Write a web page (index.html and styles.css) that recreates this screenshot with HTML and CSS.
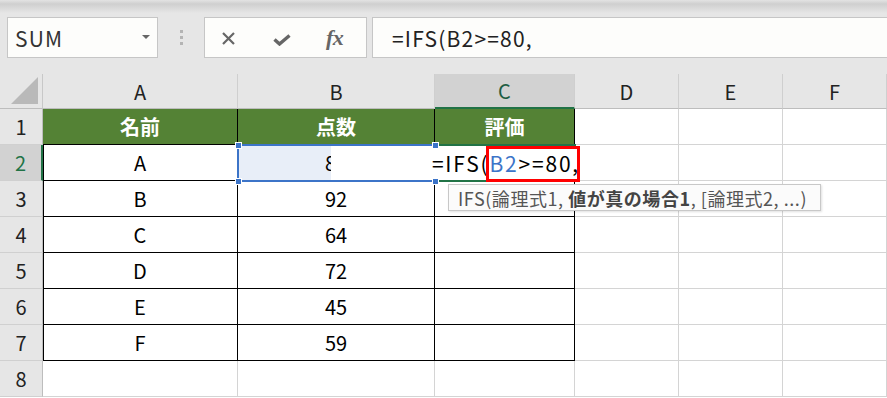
FILE: index.html
```html
<!DOCTYPE html>
<html lang="ja">
<head>
<meta charset="utf-8">
<title>IFS</title>
<link rel="stylesheet" href="styles.css">
</head>
<body>
<div class="app">
  <div class="toolbar">
    <div class="namebox"><span class="nb-text">SUM</span><span class="nb-arrow"></span></div>
    <div class="sep"><i></i><i></i><i></i></div>
    <div class="btns">
      <svg class="ic-x" width="13" height="13" viewBox="0 0 13 13"><path d="M1 1 L12 12 M12 1 L1 12" stroke="#666" stroke-width="2.2" fill="none"/></svg>
      <svg class="ic-check" width="18" height="12" viewBox="0 0 18 12"><path d="M1.5 5.5 L6.5 10 L16.5 1.5" stroke="#666" stroke-width="3.4" fill="none" stroke-linejoin="miter"/></svg>
      <span class="fx">fx</span>
    </div>
    <div class="formula">=IFS(B2&gt;=80,</div>
  </div>
  <div class="sheet">
    <div class="corner"></div>
    <div class="ch">A</div>
    <div class="ch">B</div>
    <div class="ch act">C</div>
    <div class="ch">D</div>
    <div class="ch">E</div>
    <div class="ch">F</div>

    <div class="rh">1</div>
    <div class="c t hd">名前</div>
    <div class="c t hd">点数</div>
    <div class="c t hd">評価</div>
    <div class="c"></div><div class="c"></div><div class="c"></div>

    <div class="rh act">2</div>
    <div class="c t fa">A</div>
    <div class="c t selfill">80</div>
    <div class="c t"></div>
    <div class="c"></div><div class="c"></div><div class="c"></div>

    <div class="rh">3</div>
    <div class="c t fa">B</div>
    <div class="c t">92</div>
    <div class="c t"></div>
    <div class="c"></div><div class="c"></div><div class="c"></div>

    <div class="rh">4</div>
    <div class="c t fa">C</div>
    <div class="c t">64</div>
    <div class="c t"></div>
    <div class="c"></div><div class="c"></div><div class="c"></div>

    <div class="rh">5</div>
    <div class="c t fa">D</div>
    <div class="c t">72</div>
    <div class="c t"></div>
    <div class="c"></div><div class="c"></div><div class="c"></div>

    <div class="rh">6</div>
    <div class="c t fa">E</div>
    <div class="c t">45</div>
    <div class="c t"></div>
    <div class="c"></div><div class="c"></div><div class="c"></div>

    <div class="rh">7</div>
    <div class="c t fa">F</div>
    <div class="c t">59</div>
    <div class="c t"></div>
    <div class="c"></div><div class="c"></div><div class="c"></div>

    <div class="rh">8</div>
    <div class="c"></div><div class="c"></div><div class="c"></div>
    <div class="c"></div><div class="c"></div><div class="c"></div>

    <div class="active-cell"></div>
    <div class="ref-sel"></div>
    <div class="editor">=IFS(<span class="ref">B2</span>&gt;=80,</div>
    <span class="handle h1"></span>
    <span class="handle h2"></span>
    <span class="handle h3"></span>
    <span class="handle h4"></span>
    <div class="redbox"></div>
    <div class="tip">IFS(論理式1, <b>値が真の場合1</b>, [論理式2, ...)</div>
  </div>
</div>
</body>
</html>
```
FILE: styles.css
```css
html, body {
  margin: 0;
  padding: 0;
}
body {
  width: 887px;
  height: 398px;
  overflow: hidden;
  background: #ffffff;
  font-family: "Noto Sans CJK JP", "Noto Sans", sans-serif;
}
.app {
  width: 887px;
}
.toolbar {
  height: 74px;
  box-sizing: border-box;
  padding: 17px 0 0 7px;
  display: flex;
  align-items: flex-start;
  background: linear-gradient(#e3e3e3 0px, #cfcfcf 4px, #e6e6e6 13px, #e6e6e6 100%);
}
.namebox {
  width: 151px;
  height: 41px;
  box-sizing: border-box;
  border: 1px solid #c6c6c6;
  background: #fdfdfb;
  display: flex;
  align-items: center;
  padding-left: 7px;
  position: relative;
}
.nb-text {
  font-size: 21px;
  color: #333;
  letter-spacing: 1.2px;
}
.nb-arrow {
  position: absolute;
  left: 134px;
  top: 17px;
  width: 0;
  height: 0;
  border-left: 4px solid transparent;
  border-right: 4px solid transparent;
  border-top: 4px solid #666;
}
.sep {
  width: 46px;
  height: 41px;
  display: flex;
  flex-direction: column;
  align-items: center;
  justify-content: center;
  gap: 3px;
}
.sep i {
  display: block;
  width: 3px;
  height: 3px;
  background: #b4b4b4;
}
.btns {
  width: 163px;
  height: 41px;
  box-sizing: border-box;
  border: 1px solid #c6c6c6;
  background: #fdfdfb;
  display: flex;
  align-items: center;
  padding-left: 17px;
}
.ic-x {
  display: block;
  margin-top: 2px;
}
.ic-check {
  display: block;
  margin-left: 38px;
  margin-top: 4px;
}
.fx {
  margin-left: 35px;
  font-family: "Liberation Serif", serif;
  font-style: italic;
  font-weight: bold;
  font-size: 22px;
  color: #666;
  letter-spacing: -0.5px;
}
.formula {
  margin-left: 5px;
  flex: 1;
  height: 41px;
  box-sizing: border-box;
  border: 1px solid #c6c6c6;
  border-right: none;
  background: #fdfdfb;
  padding-left: 19px;
  display: flex;
  align-items: center;
  font-size: 21px;
  letter-spacing: 1.2px;
  color: #222;
}
.sheet {
  position: relative;
  display: grid;
  grid-template-columns: 43px 195px 197px 140px 104px 104px 104px;
  grid-template-rows: 35px repeat(8, 36px);
  background: #fff;
}
.sheet > div.c, .sheet > div.ch, .sheet > div.rh, .sheet > div.corner {
  box-sizing: border-box;
}
.corner {
  background: #e6e6e6;
  border-right: 1px solid #c8c8c8;
  border-bottom: 1px solid #bdbdbd;
  position: relative;
}
.corner::after {
  content: "";
  position: absolute;
  right: 4px;
  bottom: 4px;
  width: 0;
  height: 0;
  border-left: 27px solid transparent;
  border-bottom: 27px solid #b9b9b9;
}
.ch {
  background: #e6e6e6;
  border-right: 1px solid #cfcfcf;
  border-bottom: 1px solid #bdbdbd;
  display: flex;
  align-items: center;
  justify-content: center;
  font-size: 20px;
  color: #222;
}
.ch.act {
  background: #d2d2d2;
  color: #1d5d42;
  border-bottom: 2px solid #217346;
}
.rh {
  background: #e6e6e6;
  border-right: 1px solid #bdbdbd;
  border-bottom: 1px solid #d0d0d0;
  display: flex;
  align-items: center;
  justify-content: center;
  font-size: 20px;
  color: #222;
}
.rh.act {
  background: #d2d2d2;
  color: #217346;
  border-right: 2px solid #217346;
}
.c {
  border-right: 1px solid #d4d4d4;
  border-bottom: 1px solid #d4d4d4;
  display: flex;
  align-items: center;
  justify-content: center;
  font-size: 20px;
  color: #000;
}
.c.t {
  border-right-color: #000;
  border-bottom-color: #000;
}
.c.fa {
  box-shadow: inset 1px 0 0 #000;
}
.c.hd {
  background: #548235;
  color: #fff;
  font-weight: bold;
}
.c.selfill {
  background: #e8eef8;
}
.active-cell {
  position: absolute;
  left: 434px;
  top: 70px;
  width: 142px;
  height: 38px;
  box-sizing: border-box;
  border: 2px solid #217346;
}
.ref-sel {
  position: absolute;
  left: 237px;
  top: 70px;
  width: 199px;
  height: 38px;
  box-sizing: border-box;
  border: 2px solid #3c74c8;
}
.editor {
  position: absolute;
  left: 331px;
  top: 72px;
  width: 249px;
  height: 34px;
  background: #fff;
  display: flex;
  align-items: center;
  justify-content: flex-end;
  font-size: 21px;
  letter-spacing: 1.8px;
  color: #000;
}
.ref {
  color: #3c74c8;
}
.handle {
  position: absolute;
  width: 5px;
  height: 5px;
  background: #3c74c8;
  border: 1px solid #fff;
}
.h1 { left: 235px; top: 68px; }
.h2 { left: 432px; top: 68px; }
.h3 { left: 235px; top: 104px; }
.h4 { left: 432px; top: 104px; }
.redbox {
  position: absolute;
  left: 486px;
  top: 72px;
  width: 94px;
  height: 36px;
  box-sizing: border-box;
  border: 3px solid #ff0000;
}
.tip {
  position: absolute;
  left: 448px;
  top: 110px;
  width: 373px;
  height: 27px;
  box-sizing: border-box;
  border: 1px solid #c8c8c8;
  background: #fbfbfb;
  box-shadow: 1px 1px 2px rgba(0,0,0,0.12);
  display: flex;
  align-items: center;
  padding-left: 9px;
  font-size: 18px;
  letter-spacing: 0.55px;
  color: #555;
  white-space: pre;
}
.tip b {
  color: #444;
  font-weight: bold;
}
```
